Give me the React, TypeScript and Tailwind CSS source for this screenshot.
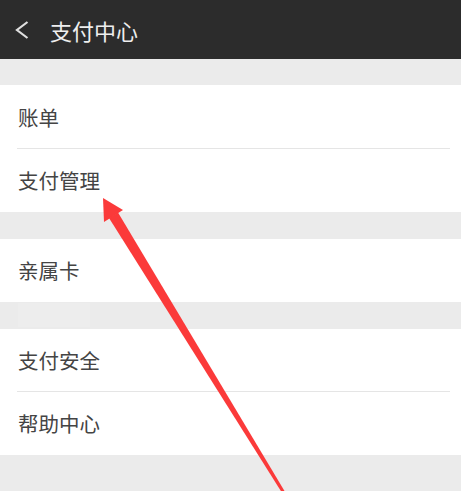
import React from "react";

const font = { fontFamily: '"Noto Sans CJK SC", "Noto Sans", sans-serif' };

function Row({ label, divider, tall }: { label: string; divider?: boolean; tall?: boolean }) {
  return (
    <div className={`relative flex items-center pl-[18px] ${tall ? "h-[63.5px]" : "h-[63px]"}`}>
      <span className="text-[20.5px] font-normal leading-none text-[#444444]">{label}</span>
      {divider && (
        <div className="absolute bottom-0 left-[17px] right-[11px] h-px bg-[#e5e5e5]" />
      )}
    </div>
  );
}

export default function App() {
  return (
    <div className="relative h-[491px] w-[461px] overflow-hidden bg-[#ebebeb]" style={font}>
      <div className="flex h-[59px] items-center bg-[#2c2c2c]">
        <svg width="14" height="18" viewBox="0 0 14 18" className="ml-[15px]">
          <path d="M12.5 1 L2 9 L12.5 17" fill="none" stroke="#e0e0e0" strokeWidth="2.2" />
        </svg>
        <span className="ml-[21px] text-[22px] font-normal leading-none text-[#eeeeee]">支付中心</span>
      </div>
      <div className="h-[26px]" />
      <div className="bg-white">
        <Row label="账单" divider tall />
        <Row label="支付管理" tall />
      </div>
      <div className="h-[27px]" />
      <div className="bg-white">
        <Row label="亲属卡" />
      </div>
      <div className="h-[27px] pl-[18px] pt-[1px]">
        <div className="h-[24px] w-[72px] bg-[#ededed]" />
      </div>
      <div className="bg-white">
        <Row label="支付安全" divider />
        <Row label="帮助中心" />
      </div>
      <svg
        className="pointer-events-none absolute left-0 top-0"
        width="461"
        height="491"
        viewBox="0 0 461 491"
      >
        <polygon points="103,198 123,210 104,222" fill="#fb3a3a" />
        <polygon points="118,212.5 284.5,491 281.5,492 109,218" fill="#fb3a3a" />
      </svg>
    </div>
  );
}
